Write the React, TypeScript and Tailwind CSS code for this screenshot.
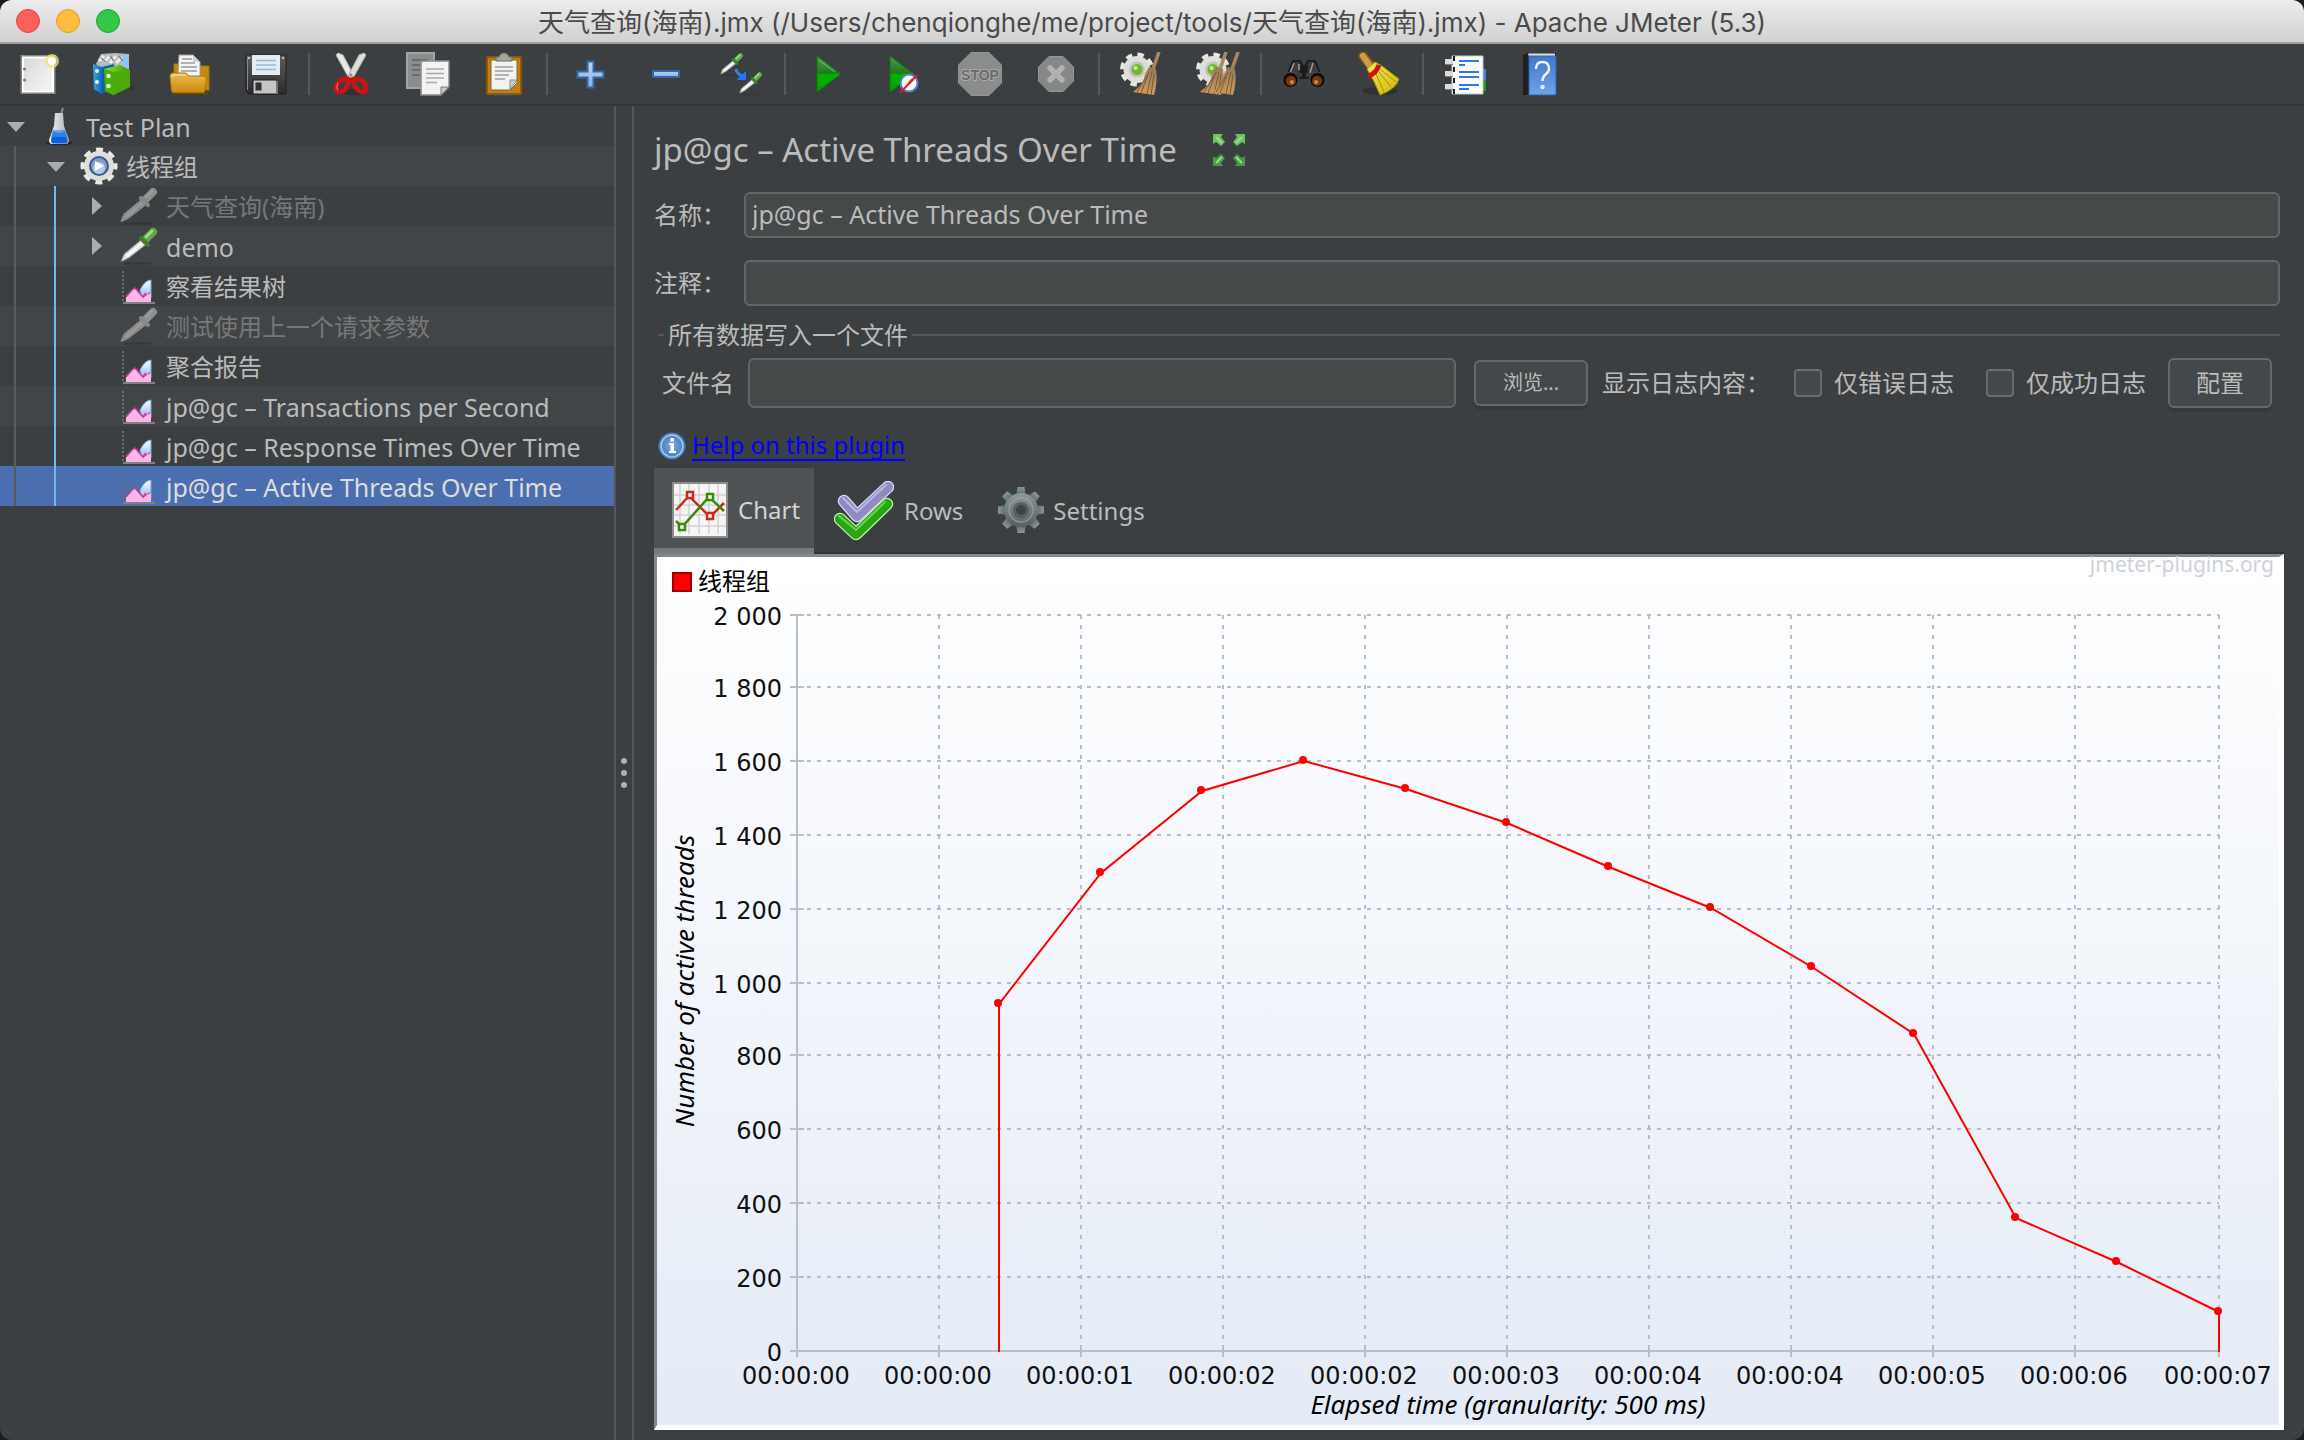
import React from "react";

type IconProps = { className?: string };

/* ---------- shared gradients ---------- */

function Gradients() {
  return (
    <svg className="absolute h-0 w-0" aria-hidden="true">
      <defs>
        <linearGradient id="paper" x1="0" y1="0" x2="1" y2="1">
          <stop offset="0" stopColor="#d9d9d9" />
          <stop offset="1" stopColor="#f6f6f6" />
        </linearGradient>
        <linearGradient id="gold" x1="0" y1="0" x2="0" y2="1">
          <stop offset="0" stopColor="#e9bb55" />
          <stop offset="1" stopColor="#c98a08" />
        </linearGradient>
        <linearGradient id="play" x1="0" y1="0" x2="0" y2="1">
          <stop offset="0" stopColor="#4f9c4f" />
          <stop offset="0.48" stopColor="#1c7a1c" />
          <stop offset="0.52" stopColor="#00b400" />
          <stop offset="1" stopColor="#00a000" />
        </linearGradient>
        <linearGradient id="cross" x1="0" y1="0" x2="0" y2="1">
          <stop offset="0" stopColor="#b9d4f0" />
          <stop offset="1" stopColor="#86b2e2" />
        </linearGradient>
        <linearGradient id="glass" x1="0" y1="0" x2="1" y2="0">
          <stop offset="0" stopColor="#f5f5f5" />
          <stop offset="1" stopColor="#a8adb2" />
        </linearGradient>
        <linearGradient id="bookBlue" x1="0" y1="0" x2="0" y2="1">
          <stop offset="0" stopColor="#3f78c9" />
          <stop offset="1" stopColor="#6ea3ea" />
        </linearGradient>
        <linearGradient id="broomYellow" x1="0" y1="0" x2="1" y2="1">
          <stop offset="0" stopColor="#f7ec60" />
          <stop offset="1" stopColor="#cfb400" />
        </linearGradient>
        <linearGradient id="straw" x1="0" y1="0" x2="0" y2="1">
          <stop offset="0" stopColor="#94795c" />
          <stop offset="1" stopColor="#d09a56" />
        </linearGradient>
        <linearGradient id="binderGreen" x1="0" y1="0" x2="1" y2="0">
          <stop offset="0" stopColor="#8fe02c" />
          <stop offset="1" stopColor="#3d9a04" />
        </linearGradient>
        <linearGradient id="binderBlue" x1="0" y1="0" x2="1" y2="0">
          <stop offset="0" stopColor="#3aa4ea" />
          <stop offset="1" stopColor="#0d6cb4" />
        </linearGradient>
        <linearGradient id="floppy" x1="0" y1="0" x2="0" y2="1">
          <stop offset="0" stopColor="#5e5e60" />
          <stop offset="1" stopColor="#2b2b2d" />
        </linearGradient>
        <linearGradient id="bluePeak" x1="0" y1="0" x2="0" y2="1">
          <stop offset="0" stopColor="#ffffff" />
          <stop offset="1" stopColor="#8fb8ee" />
        </linearGradient>
        <linearGradient id="gearGray" x1="0" y1="0" x2="0" y2="1">
          <stop offset="0" stopColor="#8b9998" />
          <stop offset="1" stopColor="#566160" />
        </linearGradient>
        <radialGradient id="infoBlue">
          <stop offset="0" stopColor="#7fabdc" />
          <stop offset="1" stopColor="#3f78bb" />
        </radialGradient>
      </defs>
    </svg>
  );
}

function Svg({ className = "size-11", box = 44, children }: IconProps & { box?: number; children: React.ReactNode }) {
  return (
    <svg className={className} viewBox={`0 0 ${box} ${box}`} fill="none" aria-hidden="true">
      {children}
    </svg>
  );
}

/* ---------- toolbar icons ---------- */

const NewIcon = () => (
  <Svg>
    <rect x="4.5" y="3" width="35" height="39" fill="#85897f" />
    <rect x="6" y="4.500" width="32" height="36" fill="#fff" />
    <rect x="8" y="6.500" width="28" height="32" fill="url(#paper)" />
    <circle cx="8.500" cy="17" r="1.500" fill="#777" />
    <circle cx="8.500" cy="28" r="1.500" fill="#777" />
    <circle cx="36" cy="9" r="7" fill="#f1e76a" fillOpacity="0.75" />
    <circle cx="36" cy="9" r="4" fill="#fff" />
  </Svg>
);

const TemplatesIcon = () => (
  <Svg>
    <path d="M4 12 9 2 23 1 37 2V20H10Z" fill="#b4babf" />
    <path d="M7 9 12 4M12 10 18 4M18 11 24 4M24 11 30 5" stroke="#eceff1" strokeWidth="3" />
    <path d="M9 6 14 10M18 4 22 9M27 4 31 9" stroke="#7d8388" strokeWidth="1.500" />
    <path d="M31 3 36 2 37 16 31 16Z" fill="#8cc5ee" />
    <path d="M1 12 10 15V42L2 37Z" fill="url(#binderBlue)" />
    <path d="M10 15 22 12V36L10 42Z" fill="#0c63a5" />
    <circle cx="5" cy="19" r="2" fill="#e7f3fb" />
    <circle cx="5" cy="30" r="2" fill="#e7f3fb" />
    <path d="M12 17 21 20V43L13 39Z" fill="#46b30a" />
    <path d="M12 17 28 13 38 18V35L21 43V20Z" fill="url(#binderGreen)" />
    <path d="M21 20 38 18V35L21 43Z" fill="#4cab0a" />
    <circle cx="16.500" cy="24" r="2.200" fill="#eefad9" />
    <circle cx="16.500" cy="34" r="2.200" fill="#eefad9" />
    <ellipse cx="40" cy="36" rx="3" ry="2" fill="#2c2e30" fillOpacity="0.500" />
  </Svg>
);

const OpenIcon = () => (
  <Svg>
    <path d="M6 12H14V26H6ZM32 14H41V38H32Z" fill="#c48a0c" stroke="#a87407" />
    <path d="M11 3H25L32 10V26H10Z" fill="#f4f4f4" stroke="#a3a3a3" />
    <path d="M14 7H24M13 11H27M13 15H29M13 19H29" stroke="#9a9a9a" strokeWidth="1.600" />
    <path d="M25 3V10H32Z" fill="#cfcfcf" />
    <path d="M2 24Q2 21 5 21H18L21 24H36Q39 24 38.500 27L36 41H6Q4 41 3.500 38Z" fill="url(#gold)" stroke="#b17a05" />
    <path d="M4 25Q4 23 6 23H17" stroke="#f7dc97" strokeWidth="1.500" />
    <path d="M5 41.500H40" stroke="#6e4b02" strokeWidth="1.500" />
  </Svg>
);

const SaveIcon = () => (
  <Svg>
    <path d="M2 4Q2 3 3 3H41Q42 3 42 4V41Q42 42 41 42H5L2 39Z" fill="url(#floppy)" stroke="#1e1e1f" />
    <rect x="8" y="3" width="28" height="20" fill="#e3edf6" />
    <path d="M12 8.500H32M12 13H32M12 17.500H32" stroke="#9db8d2" strokeWidth="1.600" />
    <path d="M3.500 5V38" stroke="#8a8a8c" />
    <rect x="9" y="28" width="24" height="14" fill="#c5c5c5" stroke="#1e1e1f" />
    <rect x="11.500" y="30.500" width="6" height="8" fill="#333" />
    <path d="M33 29V42" stroke="#777" strokeWidth="2" />
    <circle cx="5" cy="6" r="1" fill="#ddd" />
    <circle cx="39" cy="6" r="1" fill="#ddd" />
  </Svg>
);

const CutIcon = () => (
  <Svg>
    <ellipse cx="24" cy="40" rx="14" ry="3" fill="#26282a" fillOpacity="0.600" />
    <path d="M6 3 8 1 13 3 24 24 20 28Z" fill="#e8e8e4" stroke="#b6b6b0" />
    <path d="M36 3 34 1 29 3 18 24 22 28Z" fill="#dededa" stroke="#b0b0ab" />
    <circle cx="21" cy="23" r="1.500" fill="#888" />
    <path d="M19 27Q10 26 7 32Q4 41 10 40Q17 39 19 28ZM23 27Q32 26 35 32Q38 41 32 40Q25 39 23 28Z" stroke="#d01111" strokeWidth="4.500" strokeLinejoin="round" />
    <path d="M8 31Q6 36 8 38" stroke="#ff6a5c" strokeWidth="1.200" />
  </Svg>
);

const CopyIcon = () => (
  <Svg>
    <path d="M1 1H28V36H1Z" fill="#8a8d8e" stroke="#a1a3a4" strokeWidth="2" />
    <path d="M6 8H22M6 13H22M6 18H14M6 23H14" stroke="#6b6e70" strokeWidth="1.800" />
    <path d="M15 9H43V35L35 43H15Z" fill="#f3f3f2" stroke="#8a8d88" strokeWidth="1.500" />
    <path d="M20 17H38M20 21.500H38M20 26H38M20 30.500H31" stroke="#a9a9a9" strokeWidth="1.600" />
    <path d="M43 35H35V43Z" fill="#c9c9c7" stroke="#777a75" />
  </Svg>
);

const PasteIcon = () => (
  <Svg>
    <rect x="5" y="5" width="34" height="37" rx="1" fill="#c17d11" stroke="#8f5902" strokeWidth="2" />
    <path d="M9 8H35V31L28 38H9Z" fill="#f2f2f1" stroke="#7f6a40" />
    <path d="M13 15H31M13 19H31M13 23H27M13 27H23" stroke="#9d9d9d" strokeWidth="1.600" />
    <path d="M35 28H28V37Z" fill="#cdcdc9" stroke="#8a8a85" />
    <path d="M14 9V5H17Q18 1 22 1T27 5H30V9Z" fill="#a3a69c" stroke="#6d7067" />
    <path d="M12 42.500H34" stroke="#5d6060" strokeWidth="1.500" />
  </Svg>
);

const PlusIcon = () => (
  <Svg>
    <path d="M19.500 9.500H25.500V19.500H35.500V25.500H25.500V35.500H19.500V25.500H9.500V19.500H19.500Z" fill="url(#cross)" stroke="#3465a4" strokeWidth="2" />
  </Svg>
);

const MinusIcon = () => (
  <Svg>
    <path d="M9 19H35V25H9Z" fill="url(#cross)" stroke="#3465a4" strokeWidth="2" />
  </Svg>
);

/* Drawn in a 40px box, tip at the bottom left. */
function Pipette({ muted = false }: { muted?: boolean }) {
  return (
    <g strokeLinecap="round">
      <path d="M5 37.500H30" stroke="#2b2d2f" strokeWidth="2" strokeOpacity="0.600" />
      <path d="M1 35 4 28 22 13 27 18 9 32 3 35Z" fill={muted ? "#8e8e8e" : "#dfe1df"} stroke={muted ? "#868686" : "#73776f"} />
      <path d="M7 30 22 17" stroke={muted ? "#9c9c9c" : "#ffffff"} strokeWidth="2" />
      <path d="M25 14 33 6" stroke={muted ? "#8e8e8e" : "#64a84c"} strokeWidth="8" />
      <path d="M21 12 28 19" stroke={muted ? "#878787" : "#3f7d2c"} strokeWidth="4" />
      <path d="M26 11 32 5" stroke={muted ? "#9c9c9c" : "#a2db86"} strokeWidth="2.500" />
    </g>
  );
}

const ToggleIcon = () => (
  <Svg>
    <g transform="translate(0 0) scale(0.620)">
      <Pipette />
    </g>
    <g transform="translate(19 19) scale(0.620)">
      <Pipette />
    </g>
    <path d="M16 17Q17 22 22 24" stroke="#3584e4" strokeWidth="3" />
    <path d="M26 19V28H16.500Z" fill="#1f78ff" />
  </Svg>
);

const PlayIcon = () => (
  <Svg>
    <path d="M11 4 35 22 11 40Z" fill="url(#play)" stroke="#147014" />
    <path d="M13 8 29 20" stroke="#8fca8f" strokeWidth="1.200" strokeOpacity="0.600" />
  </Svg>
);

const PlayNoTimersIcon = () => (
  <Svg>
    <path d="M8 4 32 22 8 40Z" fill="url(#play)" stroke="#147014" />
    <circle cx="27" cy="31" r="8.500" fill="#f4f4f4" stroke="#4a86c8" strokeWidth="2" />
    <path d="M27 31 31 27" stroke="#999" strokeWidth="3" />
    <path d="M18 41 35 23" stroke="#e01b24" strokeWidth="2" />
  </Svg>
);

const StopIcon = () => (
  <Svg>
    <path d="M13 .5H31L43.500 13V31L31 43.500H13L.5 31V13Z" fill="#8b8d8d" stroke="#949696" />
    <text x="22" y="28" textAnchor="middle" fontSize="14" fontWeight="700" fill="#6a6c6c" stroke="#a9abab" strokeWidth="2" paintOrder="stroke" fontFamily="Liberation Sans, sans-serif">
      STOP
    </text>
  </Svg>
);

const ShutdownIcon = () => (
  <Svg>
    <path d="M15 4.500H29L39.500 15V29L29 39.500H15L4.500 29V15Z" fill="#868888" stroke="#949696" />
    <path d="M16 16 28 28M28 16 16 28" stroke="#b0b2b2" strokeWidth="5.500" strokeLinecap="round" />
  </Svg>
);

function GearWhite() {
  return (
    <g>
      <circle cx="17" cy="17.500" r="14" stroke="#e7e7e5" strokeWidth="6" strokeDasharray="6 5" />
      <circle cx="17" cy="17.500" r="13.500" fill="#dededb" />
      <circle cx="17" cy="17.500" r="8" fill="#c2c4c0" />
      <circle cx="17" cy="17.500" r="5.500" fill="#73b82a" />
      <circle cx="15.500" cy="16" r="2" fill="#c8ef8f" />
    </g>
  );
}

function StrawBroom() {
  return (
    <g>
      <path d="M39 0 33 17" stroke="#a98762" strokeWidth="3.500" />
      <path d="M29 15 36 17Q38 30 34 43L13 40Q24 32 25 22Z" fill="url(#straw)" />
      <path d="M29 20 21 41M32 20 27 42M34 22 31 43M27 24 17 40" stroke="#77593a" strokeWidth="1" />
    </g>
  );
}

const ClearIcon = () => (
  <Svg>
    <GearWhite />
    <StrawBroom />
  </Svg>
);

const ClearAllIcon = () => (
  <Svg>
    <GearWhite />
    <g transform="translate(-9 0)">
      <StrawBroom />
    </g>
    <g transform="translate(3 0)">
      <StrawBroom />
    </g>
  </Svg>
);

const SearchIcon = () => (
  <Svg>
    <path d="M11 9H18L21 14V26H4Z" fill="#3b3b3b" stroke="#141414" strokeWidth="1.500" />
    <path d="M33 9H26L23 14V26H40Z" fill="#3b3b3b" stroke="#141414" strokeWidth="1.500" />
    <path d="M18 13H26V21H18Z" fill="#1c1c1c" />
    <path d="M12 11 8 21M31 11 28 21M17 12 17 18" stroke="#9a9a9a" strokeWidth="1.500" />
    <circle cx="8.500" cy="28" r="8" fill="#111" stroke="#555" />
    <circle cx="35.500" cy="28" r="8" fill="#111" stroke="#555" />
    <circle cx="9" cy="29" r="5" fill="#7c3a0c" />
    <circle cx="35" cy="29" r="5" fill="#7c3a0c" />
    <circle cx="10" cy="30" r="2" fill="#c98a52" />
    <circle cx="34" cy="30" r="2" fill="#c98a52" />
  </Svg>
);

const BroomIcon = () => (
  <Svg>
    <ellipse cx="22" cy="39" rx="18" ry="4" fill="#26282a" fillOpacity="0.600" />
    <path d="M5 4 12 13" stroke="#8d5a14" strokeWidth="9" strokeLinecap="round" />
    <path d="M5 4 12 14" stroke="#d59b4d" strokeWidth="6" strokeLinecap="round" />
    <path d="M9 17 17 10 24 14 41 27Q38 37 22 43Q17 30 9 17Z" fill="url(#broomYellow)" stroke="#a89300" />
    <path d="M18 22 26 40M21 20 33 35M23 18 38 30" stroke="#a89300" strokeWidth="1" />
    <path d="M10 24Q18 22 21 13" stroke="#cc1212" strokeWidth="5" />
  </Svg>
);

const LogIcon = () => (
  <Svg>
    <path d="M38 17H42V28H38Z" fill="#3584e4" />
    <path d="M38 28H42V39H38Z" fill="#1c9a17" />
    <path d="M8 4H39V42H8Z" fill="#fdfdfd" stroke="#c4c4c4" />
    <path d="M10 4V42" stroke="#222" strokeWidth="2" strokeDasharray="5 6" />
    <path d="M1 10H9M1 22H9M1 35H9" stroke="#dadada" strokeWidth="6" />
    <path d="M1 12.500H9M1 24.500H9M1 37.500H9" stroke="#7e7e7e" strokeWidth="1" />
    <path d="M15 9H35M15 20H35M15 25H35M15 33H35" stroke="#2a7ae8" strokeWidth="2" />
    <path d="M15 13H21M15 37H25" stroke="#2a7ae8" strokeWidth="2" />
  </Svg>
);

const HelpIcon = () => (
  <Svg>
    <path d="M3 3 8 1H36V4H9V43H3Z" fill="#1c1f24" />
    <path d="M8 1.500H35V5H9Z" fill="#dfe4ea" />
    <path d="M9 4H36V43H9Z" fill="url(#bookBlue)" stroke="#2f62ad" />
    <path d="M16 17Q16 10 22.500 10T29 17Q29 20 25 23Q22.500 25 22.500 29" stroke="#eaf2fc" strokeWidth="2.400" />
    <circle cx="22.500" cy="35" r="2.200" fill="#eaf2fc" />
  </Svg>
);

const toolbarGroups: { label: string; icon: () => React.ReactElement }[][] = [
  [
    { label: "New", icon: NewIcon },
    { label: "Templates", icon: TemplatesIcon },
    { label: "Open", icon: OpenIcon },
    { label: "Save", icon: SaveIcon },
  ],
  [
    { label: "Cut", icon: CutIcon },
    { label: "Copy", icon: CopyIcon },
    { label: "Paste", icon: PasteIcon },
  ],
  [
    { label: "Expand all", icon: PlusIcon },
    { label: "Collapse all", icon: MinusIcon },
    { label: "Toggle", icon: ToggleIcon },
  ],
  [
    { label: "Start", icon: PlayIcon },
    { label: "Start no pauses", icon: PlayNoTimersIcon },
    { label: "Stop", icon: StopIcon },
    { label: "Shutdown", icon: ShutdownIcon },
  ],
  [
    { label: "Clear", icon: ClearIcon },
    { label: "Clear all", icon: ClearAllIcon },
  ],
  [
    { label: "Search", icon: SearchIcon },
    { label: "Reset search", icon: BroomIcon },
  ],
  [
    { label: "Function helper", icon: LogIcon },
    { label: "Help", icon: HelpIcon },
  ],
];

/* ---------- tree ---------- */

const FlaskIcon = () => (
  <Svg className="size-10" box={40}>
    <ellipse cx="19" cy="37" rx="13" ry="2" fill="#232527" />
    <path d="M21 8 23 2" stroke="#8b8f92" strokeWidth="2" />
    <path d="M15 7H23L24 20 29 34Q29 38 26 38H12Q9 38 9 34L14 20Z" fill="url(#glass)" />
    <path d="M13 25 11 34Q11 37.500 13 37.500H25Q28 37.500 27.500 34L25 25Q19 29 13 25Z" fill="#0b62e0" />
    <path d="M13 24H25L27 31H11Z" fill="#3d8bf0" fillOpacity="0.700" />
  </Svg>
);

const ThreadGroupIcon = () => (
  <Svg className="size-10" box={40}>
    <circle cx="19" cy="20" r="15" stroke="#e9e9e7" strokeWidth="7" strokeDasharray="6.400 5.380" strokeDashoffset="3.200" />
    <circle cx="19" cy="20" r="15" fill="#dededb" />
    <circle cx="19" cy="20" r="9" fill="#7d9cc8" stroke="#3a588f" strokeWidth="2" />
    <circle cx="19" cy="22" r="6" fill="#b3c8e6" />
    <path d="M15 15 24 20 15 25Z" fill="#fff" />
  </Svg>
);

const SamplerIcon = () => (
  <Svg className="size-10" box={40}>
    <Pipette />
  </Svg>
);

const SamplerMutedIcon = () => (
  <Svg className="size-10" box={40}>
    <Pipette muted />
  </Svg>
);

const ListenerIcon = () => (
  <Svg className="size-10" box={40}>
    <path d="M3 5V37" stroke="#6a6d70" strokeWidth="2" strokeDasharray="2 2" />
    <path d="M3 37H35" stroke="#7d8083" strokeWidth="2" />
    <path d="M20 24Q25 14 31 14V32H22Z" fill="url(#bluePeak)" stroke="#7ba6e0" />
    <path d="M6 30 12 24 15 22 19 26 23 31 26 27 28 29 31 27V36H6Z" fill="#fbb5ec" />
    <path d="M6 31 12 24 15 22 23 31 26 27" stroke="#bd3f86" strokeWidth="1.500" />
    <path d="M23 31 31 26" stroke="#bd3f86" strokeWidth="1.200" strokeDasharray="2 1" />
  </Svg>
);

type TreeNode = {
  label: string;
  level: 0 | 1 | 2;
  arrow?: "open" | "closed";
  icon: () => React.ReactElement;
  latin?: boolean;
  muted?: boolean;
  selected?: boolean;
};

const nodes: TreeNode[] = [
  { label: "Test Plan", level: 0, arrow: "open", icon: FlaskIcon, latin: true },
  { label: "线程组", level: 1, arrow: "open", icon: ThreadGroupIcon },
  { label: "天气查询(海南)", level: 2, arrow: "closed", icon: SamplerMutedIcon, muted: true },
  { label: "demo", level: 2, arrow: "closed", icon: SamplerIcon, latin: true },
  { label: "察看结果树", level: 2, icon: ListenerIcon },
  { label: "测试使用上一个请求参数", level: 2, icon: SamplerMutedIcon, muted: true },
  { label: "聚合报告", level: 2, icon: ListenerIcon },
  { label: "jp@gc – Transactions per Second", level: 2, icon: ListenerIcon, latin: true },
  { label: "jp@gc – Response Times Over Time", level: 2, icon: ListenerIcon, latin: true },
  { label: "jp@gc – Active Threads Over Time", level: 2, icon: ListenerIcon, latin: true, selected: true },
];

function TreeRow({ node, striped }: { node: TreeNode; striped: boolean }) {
  const Icon = node.icon;
  const back = node.selected ? "bg-[#4b6eaf] text-[#dddddd]" : striped ? "bg-[#414547]" : "";
  return (
    <li role="treeitem" aria-selected={!!node.selected} className={`flex h-10 items-center ${back}`}>
      {node.level === 0 && <span className="w-1.5 shrink-0" />}
      {node.level > 0 && <span className="ml-3.5 h-10 w-0.5 shrink-0 bg-[#5a5a5a]" />}
      {node.level === 1 && <span className="w-[30px] shrink-0" />}
      {node.level === 2 && <span className="mr-[30px] ml-[38px] h-10 w-0.5 shrink-0 bg-[#70b8f5]" />}
      <svg className="mr-3.5 size-5 shrink-0" viewBox="0 0 20 20" fill="#adadad" aria-hidden="true">
        {node.arrow === "open" && <path d="M1 6H19L10 16Z" />}
        {node.arrow === "closed" && <path d="M6 1 16 10 6 19Z" />}
      </svg>
      <Icon />
      <span
        className={`pt-0.5 pl-1.5 leading-8 whitespace-nowrap ${node.latin ? "text-[25px]" : "text-2xl leading-8"} ${node.muted ? "text-[#777777]" : ""}`}
      >
        {node.label}
      </span>
    </li>
  );
}

/* ---------- chart ---------- */

const PLOT = { left: 140, right: 1562, top: 58, bottom: 794 };
const yTicks = [2000, 1800, 1600, 1400, 1200, 1000, 800, 600, 400, 200, 0];
const xTicks = ["00:00:00", "00:00:00", "00:00:01", "00:00:02", "00:00:02", "00:00:03", "00:00:04", "00:00:04", "00:00:05", "00:00:06", "00:00:07"];
const threads = [943, 1300, 1522, 1603, 1527, 1435, 1315, 1204, 1043, 861, 361, 242, 106];

const gridY = (v: number) => PLOT.bottom - 2 * Math.ceil((v / 4000) * (PLOT.bottom - PLOT.top));
const gridX = (i: number) => PLOT.left + 2 * Math.floor((i / 20) * (PLOT.right - PLOT.left));
const pointY = (v: number) => Math.round(PLOT.bottom - (v / 2000) * (PLOT.bottom - PLOT.top));
const pointX = (i: number) => Math.round(342 + (i / 12) * (PLOT.right - 342));
const grouped = (v: number) => (v >= 1000 ? `${Math.floor(v / 1000)} ${String(v % 1000).padStart(3, "0")}` : String(v));

function Chart() {
  const line = threads.map((v, i) => `${pointX(i)},${pointY(v)}`).join(" ");
  return (
    <svg
      className="h-full w-full overflow-visible bg-linear-to-b from-white to-[#e4ebf6]"
      viewBox="0 0 1622 868"
      role="img"
      aria-label="Active threads over time"
      fontFamily='"DejaVu Sans", "Noto Sans CJK SC", sans-serif'
      fontSize="24"
      fill="#111"
    >
      <rect x="16" y="16" width="18" height="18" fill="#ff0000" stroke="#9c0000" strokeWidth="2" />
      <text x="41" y="33" fill="#000">线程组</text>
      <text x="1617" y="15" textAnchor="end" fontFamily='"Noto Sans", sans-serif' fontSize="21" fill="#cdd2da">
        jmeter-plugins.org
      </text>

      <g stroke="#b9bfca" strokeWidth="2">
        {yTicks.map((v) => (
          <g key={v}>
            {v > 0 && <line x1={PLOT.left} x2={PLOT.right} y1={gridY(v)} y2={gridY(v)} strokeDasharray="4 6" />}
            <line x1={PLOT.left - 7} x2={PLOT.left + 7} y1={gridY(v)} y2={gridY(v)} />
          </g>
        ))}
        {xTicks.map((_, i) => (
          <g key={i}>
            {i > 0 && <line x1={gridX(i)} x2={gridX(i)} y1={PLOT.top} y2={PLOT.bottom} strokeDasharray="4 6" />}
            <line x1={gridX(i)} x2={gridX(i)} y1={PLOT.bottom - 6} y2={PLOT.bottom + 6} />
          </g>
        ))}
        <line x1={PLOT.left} x2={PLOT.left} y1={PLOT.top} y2={PLOT.bottom} />
        <line x1={PLOT.left} x2={PLOT.right} y1={PLOT.bottom} y2={PLOT.bottom} />
      </g>

      {yTicks.map((v) => (
        <text key={v} x="125" y={gridY(v) + 10} textAnchor="end">
          {grouped(v)}
        </text>
      ))}
      {xTicks.map((t, i) => (
        <text key={i} x={gridX(i) - 1} y="827" textAnchor="middle">
          {t}
        </text>
      ))}

      <g fontFamily='"Noto Sans", sans-serif' fontStyle="italic" fontSize="26" fill="#000">
        <text x="851" y="857" textAnchor="middle">Elapsed time (granularity: 500 ms)</text>
        <text transform="translate(37 424) rotate(-90)" textAnchor="middle">Number of active threads</text>
      </g>

      <g stroke="#ff0000" strokeWidth="2" fill="none">
        <line x1={pointX(0)} x2={pointX(0)} y1={pointY(threads[0])} y2={PLOT.bottom + 1} />
        <polyline points={line} />
        <line x1={pointX(12)} x2={pointX(12)} y1={pointY(threads[12])} y2={PLOT.bottom + 1} />
      </g>
      {threads.map((v, i) => (
        <circle key={i} cx={pointX(i) - 1} cy={pointY(v) - 1} r="4" fill="#ff0000" />
      ))}
    </svg>
  );
}

/* ---------- plugin panel icons ---------- */

const FullscreenIcon = () => (
  <svg className="size-8" viewBox="0 0 32 32" aria-hidden="true">
    <path d="M0 0H10L8 3 12 8 8 12 3 8 0 10ZM32 0H22L24 3 20 8 24 12 29 8 32 10Z" fill="#6fc05f" />
    <path d="M0 32H10L8 29 12 24 8 20 3 24 0 22ZM32 32H22L24 29 20 24 24 20 29 24 32 22Z" fill="#459b42" />
    <path d="M3 3 9 9M29 3 23 9M3 29 9 23M29 29 23 23" stroke="#9fdc90" strokeWidth="2" />
  </svg>
);

const InfoIcon = () => (
  <svg className="size-7" viewBox="0 0 28 28" aria-hidden="true">
    <circle cx="14" cy="14" r="13.500" fill="url(#infoBlue)" />
    <circle cx="14" cy="14" r="11" fill="none" stroke="#a9c8ea" strokeWidth="1.500" />
    <path d="M11 11H16V19H18V21H11V19H12.500V13H11Z" fill="#fff" />
    <rect x="12.500" y="6" width="3.500" height="3.500" fill="#fff" />
  </svg>
);

const ChartTabIcon = () => (
  <svg className="size-14" viewBox="0 0 56 56" fill="none" aria-hidden="true">
    <rect x="1" y="1" width="54" height="54" fill="#f5f5f5" stroke="#8c8c88" strokeWidth="2" />
    <path d="M8 2V52M17 2V52M27 2V52M37 2V52M46 2V52M2 13H54M2 23H54M2 33H54M2 44H54" stroke="#d2d2d2" strokeWidth="1.500" />
    <path d="M4 28 17 14 38 35 52 21" stroke="#cc2a1a" strokeWidth="2.500" />
    <path d="M4 39 10 45 37 15 52 29" stroke="#3a8a0a" strokeWidth="2.500" />
    <path d="M15 10H21V16H15ZM35 31H41V37H35Z" fill="#fff" stroke="#cc2a1a" strokeWidth="2.500" />
    <path d="M7 42H13V48H7ZM35 12H41V18H35Z" fill="#fff" stroke="#3a8a0a" strokeWidth="2.500" />
  </svg>
);

const RowsTabIcon = () => (
  <svg className="size-15" viewBox="0 0 60 60" fill="none" strokeLinecap="round" strokeLinejoin="round" aria-hidden="true">
    <path d="M10 20 23 35 54 6" stroke="#dcdcf4" strokeWidth="12.500" />
    <path d="M10 20 23 35 54 6" stroke="#8f8cc4" strokeWidth="10" />
    <path d="M9 17 23 31 52 4" stroke="#b9b7e2" strokeWidth="2" />
    <path d="M6 38 22 53 53 23" stroke="#c7f0bd" strokeWidth="12.500" />
    <path d="M6 38 22 53 53 23" stroke="#27a512" strokeWidth="10" />
    <path d="M5 35 22 49 51 21" stroke="#6bd154" strokeWidth="2" />
  </svg>
);

const SettingsTabIcon = () => (
  <svg className="size-12" viewBox="0 0 48 48" fill="none" aria-hidden="true">
    <g fill="url(#gearGray)">
      {[0, 45, 90, 135, 180, 225, 270, 315].map((a) => (
        <path key={a} d="M20.500 1H27.500L29 10H19Z" transform={`rotate(${a} 24 24)`} />
      ))}
      <circle cx="24" cy="24" r="17" />
    </g>
    <circle cx="24" cy="24" r="12" stroke="#a1adac" strokeWidth="1.500" strokeOpacity="0.600" />
    <circle cx="24" cy="24" r="6.500" fill="#3f4546" stroke="#566160" strokeWidth="3" />
  </svg>
);

/* ---------- page ---------- */

const fieldClass =
  "min-w-0 flex-1 rounded-md border-2 border-[#646464] bg-[#45494a] px-1.5 pb-0.5 text-[25px] text-[#bbbbbb] outline-none";

function CheckOption({ id, label }: { id: string; label: string }) {
  return (
    <span className="flex items-center gap-3">
      <input id={id} type="checkbox" className="size-7 appearance-none rounded border-2 border-[#6b6b6b] bg-[#43494a]" />
      <label htmlFor={id}>{label}</label>
    </span>
  );
}

export default function App() {
  return (
    <div className="h-screen bg-[#1d1a26]">
      <Gradients />
      <div className="flex h-full flex-col overflow-hidden rounded-xl bg-[#3c3f41] font-['Noto_Sans','Noto_Sans_CJK_SC',sans-serif] text-2xl text-[#bbbbbb]">
        <header className="flex h-11 shrink-0 items-center border-b-2 border-[#9fa1a2] bg-linear-to-b from-[#ececec] to-[#d1d1d1] px-4">
          <div className="flex w-48 gap-4">
            <button aria-label="Close" className="size-6 rounded-full border border-[#e2463f] bg-[#fc605c]" />
            <button aria-label="Minimize" className="size-6 rounded-full border border-[#dfa023] bg-[#fdbc40]" />
            <button aria-label="Zoom" className="size-6 rounded-full border border-[#1aab29] bg-[#34c84a]" />
          </div>
          <h1 className="flex-1 pt-1 text-center font-['Inter','Noto_Sans_CJK_SC',sans-serif] text-[26px] leading-9 text-[#4a4a4a]">
            天气查询(海南).jmx (/Users/chenqionghe/me/project/tools/天气查询(海南).jmx) - Apache JMeter (5.3)
          </h1>
          <div className="w-48" />
        </header>

        <nav aria-label="Toolbar" className="flex h-[62px] shrink-0 items-center border-b-2 border-[#323537]">
          {toolbarGroups.map((group, g) => (
            <React.Fragment key={g}>
              {g > 0 && <span className="mx-1 h-[42px] w-0.5 bg-[#56585a]" />}
              {group.map(({ label, icon: Icon }) => (
                <button key={label} aria-label={label} className="flex w-19 justify-center">
                  <Icon />
                </button>
              ))}
            </React.Fragment>
          ))}
        </nav>

        <div className="flex min-h-0 flex-1">
          <aside className="w-[616px] shrink-0 border-r-2 border-[#555555]">
            <ul role="tree">
              {nodes.map((node, i) => (
                <TreeRow key={node.label} node={node} striped={i % 2 === 1} />
              ))}
            </ul>
          </aside>

          <div className="flex w-[18px] shrink-0 flex-col items-center justify-center gap-1.5 border-r-2 border-[#555555]">
            <span className="size-1.5 rounded-full bg-[#b0b0b0]" />
            <span className="size-1.5 rounded-full bg-[#b0b0b0]" />
            <span className="size-1.5 rounded-full bg-[#b0b0b0]" />
          </div>

          <main className="flex min-w-0 flex-1 flex-col px-5 pt-5 pb-2.5">
            <div className="mr-1 flex flex-col">
              <div className="flex h-12 items-center gap-9">
                <h2 className="text-[33px] leading-12">jp@gc – Active Threads Over Time</h2>
                <button aria-label="Full screen">
                  <FullscreenIcon />
                </button>
              </div>
              <div className="mt-[18px] flex h-[46px] items-center">
                <label htmlFor="name" className="w-[90px]">名称：</label>
                <input id="name" className={`${fieldClass} h-full`} defaultValue="jp@gc – Active Threads Over Time" />
              </div>
              <div className="mt-[22px] flex h-[46px] items-center">
                <label htmlFor="comment" className="w-[90px]">注释：</label>
                <input id="comment" className={`${fieldClass} h-full`} />
              </div>
              <fieldset className="mt-3 ml-1 min-w-0 border-t-2 border-[#555555]">
                <legend className="ml-1.5 px-1 leading-[34px]">所有数据写入一个文件</legend>
                <div className="mt-1.5 flex h-[50px] items-center pr-2 pl-1">
                  <label htmlFor="filename" className="mr-3.5">文件名</label>
                  <input id="filename" className={`${fieldClass} h-full`} />
                  <button className="ml-[18px] h-[46px] w-[114px] rounded-md border-2 border-[#686868] bg-[#43494a] text-xl shadow-[0_4px_0_#36393a]">
                    浏览...
                  </button>
                  <span className="mr-6 ml-3.5">显示日志内容：</span>
                  <CheckOption id="only-errors" label="仅错误日志" />
                  <span className="w-8" />
                  <CheckOption id="only-success" label="仅成功日志" />
                  <button className="ml-[22px] h-full w-[104px] rounded-md border-2 border-[#686868] bg-[#43494a] shadow-[0_4px_0_#36393a]">
                    配置
                  </button>
                </div>
              </fieldset>
              <div className="mt-[18px] mb-0.5 flex h-10 items-center gap-1.5 pl-1">
                <InfoIcon />
                <a href="#help" className="border-b-2 border-[#0000ff] leading-7 text-[#0000ff]">
                  Help on this plugin
                </a>
              </div>
            </div>

            <div role="tablist" className="flex h-[86px] shrink-0 border-b-2 border-[#323537]">
              <button role="tab" aria-selected="true" className="-mb-0.5 flex w-40 items-center gap-2.5 border-b-6 border-[#747a80] bg-[#4e5254] pt-1 pl-[18px] text-[#d5d5d5]">
                <ChartTabIcon />
                Chart
              </button>
              <button role="tab" aria-selected="false" className="flex items-center gap-2.5 pt-0.5 pl-5">
                <RowsTabIcon />
                Rows
              </button>
              <button role="tab" aria-selected="false" className="flex items-center gap-2 pl-8.5">
                <SettingsTabIcon />
                <span className="pt-0.5">Settings</span>
              </button>
            </div>
            <section className="min-h-0 flex-1 border-t-3 border-r-5 border-b-5 border-l-3 border-t-[#868686] border-r-white border-b-white border-l-[#868686]">
              <Chart />
            </section>
          </main>
        </div>
      </div>
    </div>
  );
}
